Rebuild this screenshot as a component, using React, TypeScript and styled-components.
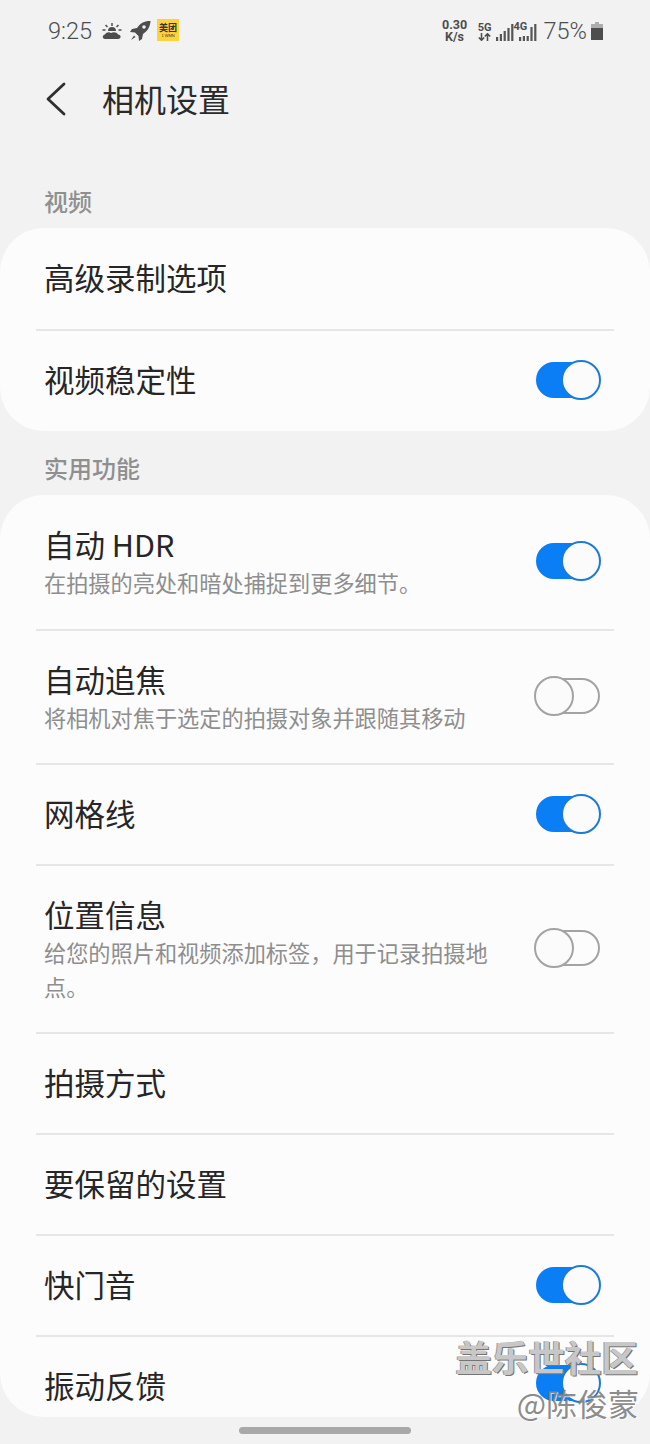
import React from "react";
import styled, { createGlobalStyle } from "styled-components";

const GlobalStyle = createGlobalStyle`
  html, body {
    margin: 0;
    padding: 0;
    background: #f2f2f2;
  }
  body {
    font-family: "Noto Sans CJK SC", "Noto Sans", sans-serif;
  }
`;

const Page = styled.div`
  position: relative;
  width: 650px;
  height: 1444px;
  overflow: hidden;
  background: #f2f2f2;
  color: #262626;
`;

const StatusBar = styled.div`
  height: 62px;
  padding: 0 47px 0 48px;
  box-sizing: border-box;
  display: flex;
  align-items: center;
  color: #4d4d4d;
`;

const Time = styled.span`
  font-family: Roboto, sans-serif;
  font-size: 23.5px;
  font-weight: 300;
  margin-right: 10px;
`;

const LeftIcons = styled.div`
  display: flex;
  align-items: center;
  gap: 7px;
  flex: 1;
`;

const MeituanBadge = styled.div`
  width: 22px;
  height: 22px;
  margin: -2px 0 0 -1px;
  background: #fdd23c;
  display: flex;
  flex-direction: column;
  align-items: center;
  justify-content: center;
  color: #333;
  font-size: 9px;
  font-weight: 700;
  line-height: 11px;
`;

const BadgeSub = styled.span`
  font-family: "Liberation Sans", sans-serif;
  font-size: 4px;
  line-height: 5px;
  font-weight: 400;
`;

const RightIcons = styled.div`
  display: flex;
  align-items: center;
`;

const Speed = styled.div`
  width: 26px;
  font-family: Roboto, sans-serif;
  font-size: 12.5px;
  font-weight: 700;
  line-height: 12px;
  text-align: center;
  margin-right: 10px;
`;

const NetStack = styled.div`
  width: 14px;
  display: flex;
  flex-direction: column;
  align-items: center;
  margin-right: 4px;
`;

const NetType = styled.span`
  font-family: Roboto, sans-serif;
  font-size: 11px;
  font-weight: 700;
  line-height: 11px;
`;

const SignalGroup = styled.div<{ $gap: number }>`
  position: relative;
  width: 18px;
  height: 17px;
  margin: 3px ${(p) => p.$gap}px 0 0;
`;

const OverNetType = styled(NetType)`
  position: absolute;
  left: -5px;
  top: -3px;
`;

const Percent = styled.span`
  font-family: Roboto, sans-serif;
  font-size: 23.5px;
  font-weight: 300;
  margin: 0 4px 0 7px;
`;

const Header = styled.div`
  height: 76px;
  display: flex;
  align-items: center;
  padding-left: 46px;
`;

const BackButton = styled.div`
  width: 56px;
  display: flex;
  align-items: center;
  margin-bottom: 2px;
`;

const Title = styled.h1`
  margin: 0 0 4px;
  font-size: 32px;
  font-weight: 400;
  color: #2a2a2a;
`;

const SectionLabel = styled.div<{ $top: number }>`
  margin-top: ${(p) => p.$top}px;
  height: 44px;
  line-height: 34px;
  padding-left: 44px;
  font-size: 24px;
  font-weight: 500;
  color: #8f8f8f;
`;

const Card = styled.div`
  background: #fcfcfc;
  border-radius: 44px;
  padding: 0 36px;
  overflow: hidden;
`;

const Row = styled.div<{ $height: number; $clipped?: boolean }>`
  height: ${(p) => p.$height}px;
  box-sizing: border-box;
  display: flex;
  align-items: ${(p) => (p.$clipped ? "flex-start" : "center")};
  padding: ${(p) => (p.$clipped ? "28px" : "0")} 14px 0 8px;
  border-bottom: 2px solid #e6e6e6;

  &:last-child {
    border-bottom: none;
  }
`;

const RowText = styled.div<{ $single: boolean }>`
  flex: 1;
  min-width: 0;
  padding-bottom: ${(p) => (p.$single ? "4px" : "2px")};
`;

const RowTitle = styled.div`
  font-size: 30.5px;
  line-height: 40px;
  color: #262626;
`;

const RowSub = styled.div`
  font-size: 22.2px;
  line-height: 34px;
  margin-top: 1px;
  color: #8e8e8e;
  width: 450px;
`;

const Track = styled.div<{ $on: boolean }>`
  position: relative;
  flex: none;
  width: 64px;
  height: 36px;
  margin-bottom: 2px;
  box-sizing: border-box;
  border-radius: 18px;
  background: ${(p) => (p.$on ? "#0a7ef5" : "#fcfcfc")};
  border: 2px solid ${(p) => (p.$on ? "#0a7ef5" : "#a3a3a3")};
`;

const Knob = styled.div<{ $on: boolean }>`
  position: absolute;
  top: -4px;
  ${(p) => (p.$on ? "right: -3px;" : "left: -4px;")}
  width: 40px;
  height: 40px;
  box-sizing: border-box;
  border-radius: 50%;
  background: #fbfbfb;
  border: 2px solid ${(p) => (p.$on ? "#1c7ad8" : "#a3a3a3")};
`;

const HomeBar = styled.div`
  position: absolute;
  left: 239px;
  top: 1427px;
  width: 172px;
  height: 7px;
  border-radius: 4px;
  background: #a8a8a8;
`;

const Watermark = styled.div`
  position: absolute;
  right: 12px;
  top: 1334px;
  text-align: right;
  pointer-events: none;
`;

const WatermarkMain = styled.div`
  font-size: 36.5px;
  line-height: 46px;
  font-weight: 700;
  color: rgba(205, 205, 205, 0.95);
  text-shadow: 1px 1px 0 #757575, -1px 0 0 #999;
`;

const WatermarkUser = styled.div`
  font-size: 31px;
  line-height: 38px;
  margin: 4px -1px 0 0;
  color: rgba(125, 125, 125, 0.9);
  text-shadow: 1px 1px 0 rgba(255, 255, 255, 0.7);
`;

const Toggle = ({ on }: { on: boolean }) => (
  <Track $on={on}>
    <Knob $on={on} />
  </Track>
);

const Bars = ({ heights }: { heights: number[] }) => (
  <svg width="18" height="17" viewBox="0 0 18 17" fill="#555" style={{ display: "block" }}>
    {heights.map((h, i) => (
      <rect key={i} x={i * 3.8} y={17 - h} width="2.2" height={h} />
    ))}
  </svg>
);

type Item = {
  title: string;
  sub?: string;
  toggle?: boolean;
  height: number;
  clipped?: boolean;
};

const videoItems: Item[] = [
  { title: "高级录制选项", height: 103 },
  { title: "视频稳定性", toggle: true, height: 100 },
];

const toolItems: Item[] = [
  { title: "自动 HDR", sub: "在拍摄的亮处和暗处捕捉到更多细节。", toggle: true, height: 136 },
  { title: "自动追焦", sub: "将相机对焦于选定的拍摄对象并跟随其移动", toggle: false, height: 134 },
  { title: "网格线", toggle: true, height: 101 },
  { title: "位置信息", sub: "给您的照片和视频添加标签，用于记录拍摄地点。", toggle: false, height: 168 },
  { title: "拍摄方式", height: 101 },
  { title: "要保留的设置", height: 101 },
  { title: "快门音", toggle: true, height: 101 },
  { title: "振动反馈", toggle: true, height: 80, clipped: true },
];

const renderRow = (item: Item) => (
  <Row key={item.title} $height={item.height} $clipped={item.clipped}>
    <RowText $single={!item.sub}>
      <RowTitle>{item.title}</RowTitle>
      {item.sub && <RowSub>{item.sub}</RowSub>}
    </RowText>
    {item.toggle !== undefined && <Toggle on={item.toggle} />}
  </Row>
);

export default function App() {
  return (
    <Page>
      <GlobalStyle />
      <StatusBar>
        <Time>9:25</Time>
        <LeftIcons>
          <svg width="20" height="18" viewBox="0 0 20 18" fill="#4d4d4d">
            <path d="M6 9a4 4 0 0 1 8 0z" />
            <path d="M10 1v3M3.500 3l2 2M16.500 3l-2 2M0.500 8h3M16.500 8h3" stroke="#4d4d4d" strokeWidth="1.5" />
            <path d="M3 17c-3 0-3-4 0-4.500 1-2 4-3 6-1.500 2-1.500 6-1 7 1.500 3.500 0 3.500 4.500 0 4.500z" />
          </svg>
          <svg width="22" height="22" viewBox="0 0 22 22" fill="#4d4d4d">
            <path d="M21 1c-6 0-10 2.500-13 7L3 9 1 12l5 .5 3.500 3.500.5 5 3-2 1-5c4.500-3 7-7 7.500-13z" />
            <circle cx="15" cy="7" r="1.800" fill="#f2f2f2" />
            <path d="M5 15.500 2 20l4.500-3z" />
          </svg>
          <MeituanBadge>
            美团
            <BadgeSub>1 WMN</BadgeSub>
          </MeituanBadge>
        </LeftIcons>
        <RightIcons>
          <Speed>
            0.30
            <br />
            K/s
          </Speed>
          <NetStack>
            <NetType>5G</NetType>
            <svg width="13" height="8" viewBox="0 0 13 8" fill="none" stroke="#4d4d4d" strokeWidth="1.6">
              <path d="M3.500 0v7M.8 4.500l2.700 2.700 2.700-2.700M9.500 8V1M6.800 3.500 9.500.8l2.700 2.700" />
            </svg>
          </NetStack>
          <SignalGroup $gap={5}>
            <Bars heights={[4, 7, 10, 13, 17]} />
          </SignalGroup>
          <SignalGroup $gap={0}>
            <OverNetType>4G</OverNetType>
            <Bars heights={[4, 5, 5, 14, 17]} />
          </SignalGroup>
          <Percent>75%</Percent>
          <svg width="12" height="18" viewBox="0 0 12 18" fill="#4d4d4d">
            <path d="M4 0h4v2h4v4H0V2h4z" fill="#adadad" />
            <rect x="0" y="6" width="12" height="12" />
          </svg>
        </RightIcons>
      </StatusBar>
      <Header>
        <BackButton>
          <svg width="20" height="34" viewBox="0 0 20 34" fill="none" stroke="#2f2f2f" strokeWidth="2.800" strokeLinecap="round" strokeLinejoin="round">
            <path d="M18 2 2 17l16 15" />
          </svg>
        </BackButton>
        <Title>相机设置</Title>
      </Header>
      <SectionLabel $top={46}>视频</SectionLabel>
      <Card>{videoItems.map(renderRow)}</Card>
      <SectionLabel $top={20}>实用功能</SectionLabel>
      <Card>{toolItems.map(renderRow)}</Card>
      <HomeBar />
      <Watermark>
        <WatermarkMain>盖乐世社区</WatermarkMain>
        <WatermarkUser>@陈俊蒙</WatermarkUser>
      </Watermark>
    </Page>
  );
}
